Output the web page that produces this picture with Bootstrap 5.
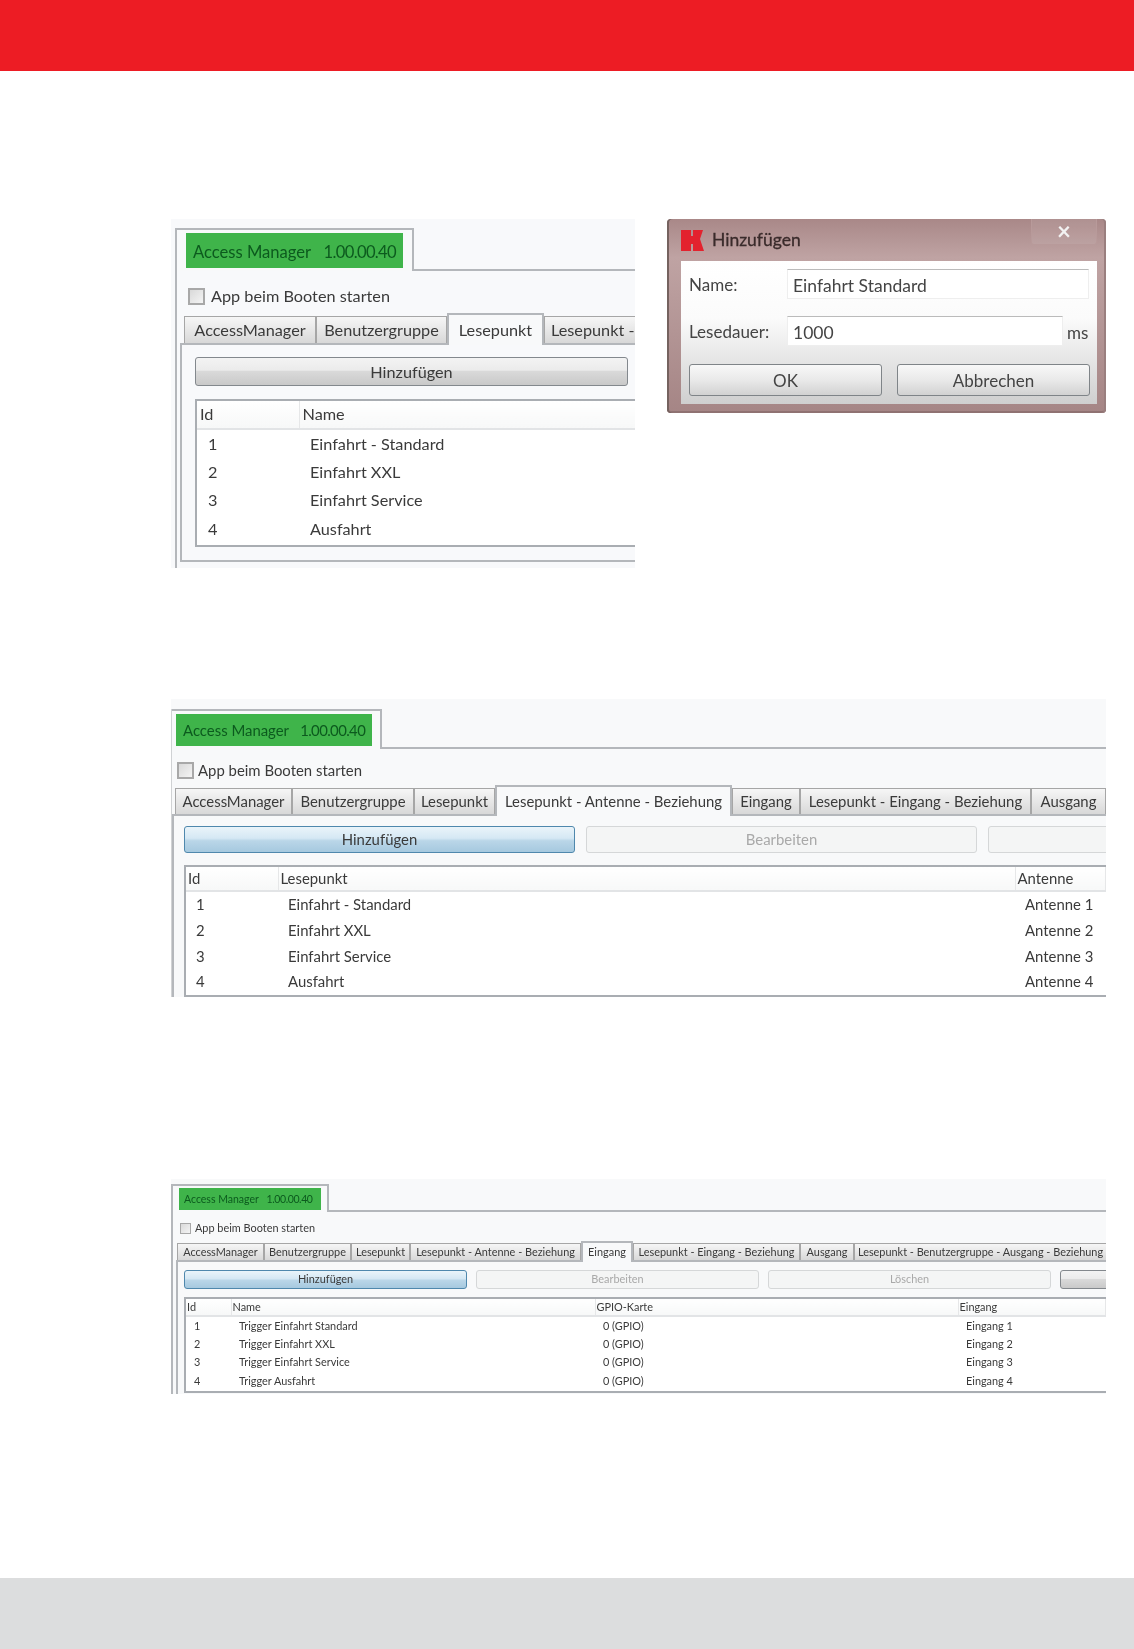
<!DOCTYPE html>
<html lang="de">
<head>
<meta charset="utf-8">
<title>Access Manager</title>
<link rel="stylesheet" href="https://cdn.jsdelivr.net/npm/bootstrap@5.3.0/dist/css/bootstrap.min.css">
<style>
html,body{margin:0;background:#fff}
.page{min-height:1649px;width:1134px}
.top-band{height:71px;background:#ed1c24}
.foot-band{height:71px;background:#dcddde}
.row-a{margin:148px 28px 0 171px;gap:32px}
.shot{background:#f8f9fa;overflow:hidden;color:#3a3a3a;font-family:"Lato","Liberation Sans",sans-serif;filter:blur(.35px);flex:none}
.shot-a{width:464px;height:349px;padding:9px 0 0 4px;font-size:16.25px;background:#f8f9fb}
.shot-b{width:935px;height:298px;margin:131px 0 0 171px;padding:10px 0 0 0;font-size:14.9px;filter:blur(.5px)}
.shot-c{width:935px;height:215px;margin:182px 0 0 171px;padding:5px 0 0 0;font-size:10.9px;filter:blur(.65px)}
.frame{border-left:2px solid #b4b7bb;height:100%}
.shot-b .frame{border-left:1px solid #d0d2d4}
.head-row{display:flex}
.app-tab{border:2px solid #b4b7bb;border-bottom:0;border-left:0;background:#f8f9fa;flex:none}
.shot-a .app-tab{width:237px;height:43px;padding:3px 9px 0 9px}
.shot-b .app-tab{width:210px;height:40px;padding:3px 8px 0 4px}
.shot-c .app-tab{width:156px;height:28px;padding:2px 6px 0 6px}
.head-line{flex:1;border-bottom:2px solid #b4b7bb}
.app-name{background:#3fb44a;color:#0c5a1e;height:100%;display:flex;align-items:center;white-space:pre}
.shot-a .app-name{height:35px;padding:3px 0 0 7px;font-size:16.6px}
.shot-b .app-name{height:32px;padding-left:7px;font-size:14.9px}
.shot-c .app-name{height:22px;padding:1px 0 0 5px;font-size:10.5px}
.app-ver{letter-spacing:-.04em}
.boot-row{display:flex;align-items:center}
.shot-a .boot-row{margin:17px 0 0 11px;height:17px;gap:6px}
.shot-b .boot-row{margin:13px 0 0 5px;height:17px;gap:4px}
.shot-c .boot-row{margin:10px 0 0 7px;height:12px;gap:4px}
.shot .boot-box[type=checkbox]{flex:none;margin:0;background:linear-gradient(135deg,#d9d9d9,#f4f4f4);border:2px solid #a8a8a8;border-radius:0;display:block}
.shot-a .boot-box[type=checkbox],.shot-b .boot-box[type=checkbox]{width:17px;height:17px}
.shot-c .boot-box[type=checkbox]{width:11px;height:11px;border-width:1px}
.strip{flex-wrap:nowrap;border:0;align-items:flex-end;margin:0}
.shot-a .strip{margin:8px 0 0 7px;height:30px}
.shot-b .strip{margin:9px 0 0 3px;height:26px}
.shot-c .strip{margin:7px 0 0 4px;height:19px}
.strip .nav-link{margin:0;color:#3a3a3a;border:1px solid #a6a6a6;border-bottom:0;border-radius:0;padding:0;background:linear-gradient(#f6f6f6,#d8d8d8);display:flex;align-items:center;justify-content:center;white-space:nowrap;height:27px}
.strip .nav-item{flex:none}
.strip .nav-link.active{background:#f8f9fa;border:2px solid #b4b7bb;border-bottom:0;color:#3a3a3a;position:relative;z-index:1;margin-bottom:-2px;height:32px}
.shot-b .strip .nav-link{height:26px}
.shot-b .strip .nav-link.active{height:31px}
.shot-c .strip .nav-link{height:17px}
.shot-c .strip .nav-link.active{height:21px}
.pane{border:2px solid #b4b7bb;border-right:0}
.shot-a .pane{margin-left:3px;height:219px;padding:12px 0 0 13px}
.shot-b .pane{margin-left:0;height:200px;padding:10px 0 0 10px;border-bottom:0}
.shot-c .pane{margin-left:3px;height:150px;padding:8px 0 0 6px;border-bottom:0}
.btn-line{display:flex}
.shot-a .btn-line{height:29px;width:433px}
.shot-b .btn-line{height:27px;gap:11px;width:1000px}
.shot-c .btn-line{height:19px;gap:9px;width:1000px}
.wbtn{flex:none;padding:0;border-radius:3px;font-size:inherit;color:#3a3a3a;line-height:1;display:flex;align-items:center;justify-content:center}
.wbtn-gray,.wbtn-gray:hover{background:linear-gradient(#f3f3f3 0,#ebebeb 45%,#d9d9d9 50%,#c9c9c9 100%);border:1px solid #83888d}
.wbtn-blue,.wbtn-blue:hover{background:linear-gradient(#eaf4fa 0,#d5e8f4 45%,#bad6e8 55%,#a6c9df 100%);border:1px solid #4f88ad}
.wbtn.wbtn-off:disabled{background:#f4f5f5;border:1px solid #d5d7d8;color:#a9a9a9;opacity:1}
.shot-a .wbtn{width:433px;height:29px;padding-top:2px}
.shot-b .wbtn{width:391px;height:27px}
.shot-b .wbtn-rest{width:300px}
.shot-c .wbtn{width:283px;height:19px}
.shot-c .wbtn-rest{width:100px}
.grid-box{border:2px solid #a9adb2;border-right:0;background:#fff;overflow:hidden}
.shot-a .grid-box{margin-top:13px;height:148px}
.shot-b .grid-box{margin-top:12px;height:132px}
.shot-c .grid-box{margin-top:8px;height:96px}
.grid-box table{table-layout:fixed;margin:0;background:transparent;color:#3a3a3a;--bs-table-bg:transparent;--bs-table-color:#3a3a3a}
.shot-a table{width:440px}
.shot-b table{width:920px}
.shot-c table{width:920px}
.grid-box th{font-weight:400;padding:0 0 0 3px;border-bottom:2px solid #e2e4e6;border-right:1px solid #e6e7e8;background:linear-gradient(#fff,#f7f8f8);vertical-align:middle;white-space:nowrap;overflow:hidden}
.grid-box td{padding:0 0 0 11px;border:0;vertical-align:middle;white-space:nowrap}
.shot-a th{height:28px;padding-bottom:0}.shot-a td{height:28.6px}
.shot-b th{height:24px;padding-left:2px}.shot-b td{height:25.9px;padding-left:10px}
.shot-c th{height:17px;padding-left:1px}.shot-c td{height:18.5px;padding-left:8px}
.c-id-a{width:102px}
.c-id-b{width:92px}.c-le-b{width:737px}
.c-id-c{width:45px}.c-na-c{width:364px}.c-gp-c{width:363px}
.dlg{width:439px;height:194px;flex:none;border-radius:4px;background:linear-gradient(#a98888,#bfa3a3 20%,#a58585);padding:0 9px 9px 14px;display:flex;flex-direction:column;color:#444;font-family:"Lato","Liberation Sans",sans-serif;font-size:17px;filter:blur(.7px);box-shadow:inset 2px 0 0 #75625f,inset -2px 0 0 #9a7f7f,inset 0 -2px 0 #8f7272}
.dlg-title{height:42px;display:flex;align-items:center;gap:8px;flex:none;font-size:17.5px;color:#3a2b2b;-webkit-text-stroke:.3px #3a2b2b}
.dlg-close{margin-left:auto;width:66px;height:26px;align-self:flex-start;border:1px solid #b89a9a;border-top:0;border-radius:0 0 3px 3px;color:#f2f2f2;font-weight:700;font-size:24px;line-height:24px;text-align:center;background:rgba(255,255,255,.08);-webkit-text-stroke:0}
.dlg-body{flex:1;background:linear-gradient(#fff 0,#fbfbfb 40%,#cfcfcf 100%);padding:8px 7px 0 8px;display:flex;flex-direction:column}
.dlg-row{display:flex;align-items:center;height:30px}
.dlg-row+.dlg-row{margin-top:17px}
.dlg-lab{width:98px;flex:none;padding-top:2px}
.dlg .dlg-in{flex:none;background:#fff;border:1px solid #eee;border-top:1px solid #bbb;border-radius:0;height:30px;padding:2px 5px 0;font-size:17.5px;color:#444;font-family:inherit;box-shadow:none}
.dlg .dlg-w1{width:302px}.dlg .dlg-w2{width:276px}
.dlg-unit{margin-left:4px;padding-top:4px}
.dlg-btns{display:flex;justify-content:space-between;margin-top:18px}
.dlg-btn,.dlg-btn:hover{width:193px;height:32px;padding:2px 0 0;border-radius:3px;font-size:17px;color:#444;background:linear-gradient(#f8f8f8,#e9e9e9 50%,#d2d2d2);border:1px solid #7f8488}
.mt-foot{margin-top:auto}
.tab-a1 .nav-link{width:132px}.tab-a2 .nav-link{width:131px}.tab-a3 .nav-link{width:97px}.tab-a4 .nav-link{width:91px;justify-content:flex-start;padding-left:6px;border-right:0}
.tab-b1 .nav-link{width:117px}.tab-b2 .nav-link{width:122px}.tab-b3 .nav-link{width:81px}.tab-b4 .nav-link{width:237px}.tab-b5 .nav-link{width:68px}.tab-b6 .nav-link{width:231px}.tab-b7 .nav-link{width:75px}
.tab-c1 .nav-link{width:87px}.tab-c2 .nav-link{width:87px}.tab-c3 .nav-link{width:59px}.tab-c4 .nav-link{width:171px}.tab-c5 .nav-link{width:52px}.tab-c6 .nav-link{width:167px}.tab-c7 .nav-link{width:54px}.tab-c8 .nav-link{width:253px}
</style>
</head>
<body>
<div class="page d-flex flex-column">
  <div class="top-band"></div>

  <div class="row-a d-flex align-items-start">
    <section class="shot shot-a">
      <div class="frame">
        <div class="head-row">
          <div class="app-tab"><div class="app-name">Access Manager   <span class="app-ver">1.00.00.40</span></div></div>
          <div class="head-line"></div>
        </div>
        <div class="boot-row"><input class="boot-box form-check-input" type="checkbox" aria-label="App beim Booten starten"><span>App beim Booten starten</span></div>
        <ul class="nav nav-tabs strip">
          <li class="nav-item tab-a1"><a class="nav-link" href="#">AccessManager</a></li>
          <li class="nav-item tab-a2"><a class="nav-link" href="#">Benutzergruppe</a></li>
          <li class="nav-item tab-a3"><a class="nav-link active" href="#">Lesepunkt</a></li>
          <li class="nav-item tab-a4"><a class="nav-link" href="#">Lesepunkt -</a></li>
        </ul>
        <div class="pane">
          <div class="btn-line"><button class="btn wbtn wbtn-gray" type="button">Hinzufügen</button></div>
          <div class="grid-box">
            <table class="table">
              <colgroup><col class="c-id-a"><col></colgroup>
              <thead><tr><th>Id</th><th>Name</th></tr></thead>
              <tbody>
                <tr><td>1</td><td>Einfahrt - Standard</td></tr>
                <tr><td>2</td><td>Einfahrt XXL</td></tr>
                <tr><td>3</td><td>Einfahrt Service</td></tr>
                <tr><td>4</td><td>Ausfahrt</td></tr>
              </tbody>
            </table>
          </div>
        </div>
      </div>
    </section>

    <section class="dlg">
      <div class="dlg-title">
        <svg width="23" height="22" viewBox="0 0 23 22" aria-hidden="true"><path fill="#e3222e" d="M0 1h10v6h2V1h10l-3 9 4 12H12v-7h-2v7H0z"/></svg>
        <span>Hinzufügen</span>
        <span class="dlg-close">×</span>
      </div>
      <div class="dlg-body">
        <div class="dlg-row"><span class="dlg-lab">Name:</span><input class="form-control dlg-in dlg-w1" type="text" value="Einfahrt Standard" aria-label="Name"></div>
        <div class="dlg-row"><span class="dlg-lab">Lesedauer:</span><input class="form-control dlg-in dlg-w2" type="text" value="1000" aria-label="Lesedauer"><span class="dlg-unit">ms</span></div>
        <div class="dlg-btns"><button class="btn dlg-btn" type="button">OK</button><button class="btn dlg-btn" type="button">Abbrechen</button></div>
      </div>
    </section>
  </div>

  <section class="shot shot-b">
    <div class="frame">
      <div class="head-row">
        <div class="app-tab"><div class="app-name">Access Manager   <span class="app-ver">1.00.00.40</span></div></div>
        <div class="head-line"></div>
      </div>
      <div class="boot-row"><input class="boot-box form-check-input" type="checkbox" aria-label="App beim Booten starten"><span>App beim Booten starten</span></div>
      <ul class="nav nav-tabs strip">
        <li class="nav-item tab-b1"><a class="nav-link" href="#">AccessManager</a></li>
        <li class="nav-item tab-b2"><a class="nav-link" href="#">Benutzergruppe</a></li>
        <li class="nav-item tab-b3"><a class="nav-link" href="#">Lesepunkt</a></li>
        <li class="nav-item tab-b4"><a class="nav-link active" href="#">Lesepunkt - Antenne - Beziehung</a></li>
        <li class="nav-item tab-b5"><a class="nav-link" href="#">Eingang</a></li>
        <li class="nav-item tab-b6"><a class="nav-link" href="#">Lesepunkt - Eingang - Beziehung</a></li>
        <li class="nav-item tab-b7"><a class="nav-link" href="#">Ausgang</a></li>
      </ul>
      <div class="pane">
        <div class="btn-line">
          <button class="btn wbtn wbtn-blue" type="button">Hinzufügen</button>
          <button class="btn wbtn wbtn-off" type="button" disabled>Bearbeiten</button>
          <button class="btn wbtn wbtn-off wbtn-rest" type="button" disabled></button>
        </div>
        <div class="grid-box">
          <table class="table">
            <colgroup><col class="c-id-b"><col class="c-le-b"><col></colgroup>
            <thead><tr><th>Id</th><th>Lesepunkt</th><th>Antenne</th></tr></thead>
            <tbody>
              <tr><td>1</td><td>Einfahrt - Standard</td><td>Antenne 1</td></tr>
              <tr><td>2</td><td>Einfahrt XXL</td><td>Antenne 2</td></tr>
              <tr><td>3</td><td>Einfahrt Service</td><td>Antenne 3</td></tr>
              <tr><td>4</td><td>Ausfahrt</td><td>Antenne 4</td></tr>
            </tbody>
          </table>
        </div>
      </div>
    </div>
  </section>

  <section class="shot shot-c">
    <div class="frame">
      <div class="head-row">
        <div class="app-tab"><div class="app-name">Access Manager   <span class="app-ver">1.00.00.40</span></div></div>
        <div class="head-line"></div>
      </div>
      <div class="boot-row"><input class="boot-box form-check-input" type="checkbox" aria-label="App beim Booten starten"><span>App beim Booten starten</span></div>
      <ul class="nav nav-tabs strip">
        <li class="nav-item tab-c1"><a class="nav-link" href="#">AccessManager</a></li>
        <li class="nav-item tab-c2"><a class="nav-link" href="#">Benutzergruppe</a></li>
        <li class="nav-item tab-c3"><a class="nav-link" href="#">Lesepunkt</a></li>
        <li class="nav-item tab-c4"><a class="nav-link" href="#">Lesepunkt - Antenne - Beziehung</a></li>
        <li class="nav-item tab-c5"><a class="nav-link active" href="#">Eingang</a></li>
        <li class="nav-item tab-c6"><a class="nav-link" href="#">Lesepunkt - Eingang - Beziehung</a></li>
        <li class="nav-item tab-c7"><a class="nav-link" href="#">Ausgang</a></li>
        <li class="nav-item tab-c8"><a class="nav-link" href="#">Lesepunkt - Benutzergruppe - Ausgang - Beziehung</a></li>
      </ul>
      <div class="pane">
        <div class="btn-line">
          <button class="btn wbtn wbtn-blue" type="button">Hinzufügen</button>
          <button class="btn wbtn wbtn-off" type="button" disabled>Bearbeiten</button>
          <button class="btn wbtn wbtn-off" type="button" disabled>Löschen</button>
          <button class="btn wbtn wbtn-gray wbtn-rest" type="button"></button>
        </div>
        <div class="grid-box">
          <table class="table">
            <colgroup><col class="c-id-c"><col class="c-na-c"><col class="c-gp-c"><col></colgroup>
            <thead><tr><th>Id</th><th>Name</th><th>GPIO-Karte</th><th>Eingang</th></tr></thead>
            <tbody>
              <tr><td>1</td><td>Trigger Einfahrt Standard</td><td>0 (GPIO)</td><td>Eingang 1</td></tr>
              <tr><td>2</td><td>Trigger Einfahrt XXL</td><td>0 (GPIO)</td><td>Eingang 2</td></tr>
              <tr><td>3</td><td>Trigger Einfahrt Service</td><td>0 (GPIO)</td><td>Eingang 3</td></tr>
              <tr><td>4</td><td>Trigger Ausfahrt</td><td>0 (GPIO)</td><td>Eingang 4</td></tr>
            </tbody>
          </table>
        </div>
      </div>
    </div>
  </section>

  <div class="foot-band mt-foot"></div>
</div>
<script src="https://cdn.jsdelivr.net/npm/bootstrap@5.3.0/dist/js/bootstrap.bundle.min.js"></script>
</body>
</html>
